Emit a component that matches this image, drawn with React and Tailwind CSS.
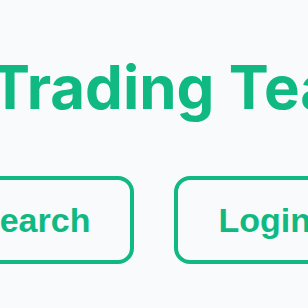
import React from 'react';

const App = () => {
  return (
    <div className="w-[308px] h-[308px] overflow-hidden bg-[#f8fafc]">
      <div className="flex flex-col pt-[57px]">
        <h1 className="ml-[-10px] whitespace-nowrap text-[60px] leading-[60px] font-bold text-[#10b981] font-['Inter',sans-serif]">
          Trading Team Hub
        </h1>
        <div className="flex gap-10 mt-[59px] ml-[-67px] font-['Liberation_Sans',Arial,sans-serif]">
          <button className="shrink-0 px-10 py-5 border-4 border-[#10b981] rounded-2xl text-[34px] leading-10 font-bold text-[#10b981]">
            Search
          </button>
          <button className="shrink-0 px-10 py-5 border-4 border-[#10b981] rounded-2xl text-[34px] leading-10 font-bold text-[#10b981]">
            Login
          </button>
        </div>
      </div>
    </div>
  );
};

export default App;
